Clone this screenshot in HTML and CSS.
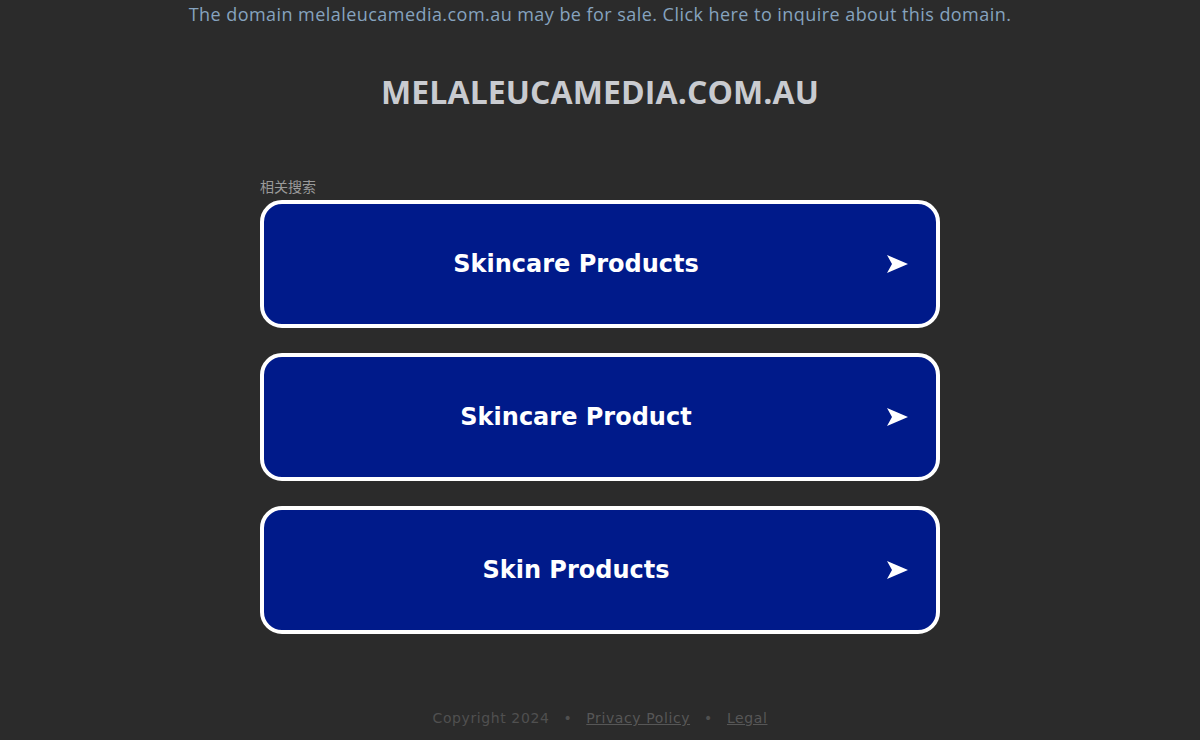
FILE: index.html
```html
<!DOCTYPE html>
<html>
<head>
<meta charset="utf-8">
<link rel="stylesheet" href="styles.css">
</head>
<body>
<div class="page">
  <div class="topline">The domain melaleucamedia.com.au may be for sale. Click here to inquire about this domain.</div>
  <h1 class="title">MELALEUCAMEDIA.COM.AU</h1>
  <div class="related">
    <div class="label">相关搜索</div>
    <a class="btn" href="#"><span class="btn-text">Skincare Products</span><svg class="arrow" viewBox="0 0 21 18" width="21" height="18"><polygon points="0,0 21,9 0,18 5,9" fill="#ffffff"/></svg></a>
    <a class="btn" href="#"><span class="btn-text">Skincare Product</span><svg class="arrow" viewBox="0 0 21 18" width="21" height="18"><polygon points="0,0 21,9 0,18 5,9" fill="#ffffff"/></svg></a>
    <a class="btn" href="#"><span class="btn-text">Skin Products</span><svg class="arrow" viewBox="0 0 21 18" width="21" height="18"><polygon points="0,0 21,9 0,18 5,9" fill="#ffffff"/></svg></a>
  </div>
  <div class="footer">
    <span>Copyright 2024</span><span class="dot">•</span><a href="#">Privacy Policy</a><span class="dot">•</span><a href="#">Legal</a>
  </div>
</div>
</body>
</html>
```
FILE: styles.css
```css
html, body {
  margin: 0;
  padding: 0;
  background: #2b2b2b;
}
.page {
  width: 1200px;
  height: 740px;
  display: flex;
  flex-direction: column;
  align-items: center;
  overflow: hidden;
}
.topline {
  margin-top: 2px;
  font-family: "Open Sans", sans-serif;
  font-size: 18px;
  line-height: 24px;
  color: #86a3bf;
  letter-spacing: 0.45px;
}
.title {
  margin: 46px 0 0;
  font-family: "Open Sans", sans-serif;
  font-weight: 700;
  font-size: 32px;
  line-height: 40px;
  color: #c9cbd0;
  letter-spacing: 0.1px;
}
.related {
  margin-top: 64px;
  width: 680px;
  display: flex;
  flex-direction: column;
}
.label {
  font-family: "Noto Sans CJK SC", sans-serif;
  font-size: 14px;
  line-height: 20px;
  color: #9a9a9a;
  margin-bottom: 4px;
}
.btn {
  box-sizing: border-box;
  height: 128px;
  border: 4px solid #ffffff;
  border-radius: 22px;
  background: #001a8a;
  display: flex;
  align-items: center;
  text-decoration: none;
  color: #ffffff;
  margin-bottom: 25px;
}
.btn-text {
  flex: 1;
  text-align: center;
  font-family: "DejaVu Sans", Verdana, sans-serif;
  font-weight: 700;
  font-size: 24px;
  padding-left: 7px;
}
.arrow {
  margin-left: 6px;
  margin-right: 28px;
  flex: none;
}
.footer {
  margin-top: 51px;
  font-family: "DejaVu Sans", sans-serif;
  font-size: 14px;
  color: #505050;
  letter-spacing: 0.6px;
}
.footer a {
  color: #575757;
  text-decoration: underline;
}
.dot {
  margin: 0 14px;
}
```
